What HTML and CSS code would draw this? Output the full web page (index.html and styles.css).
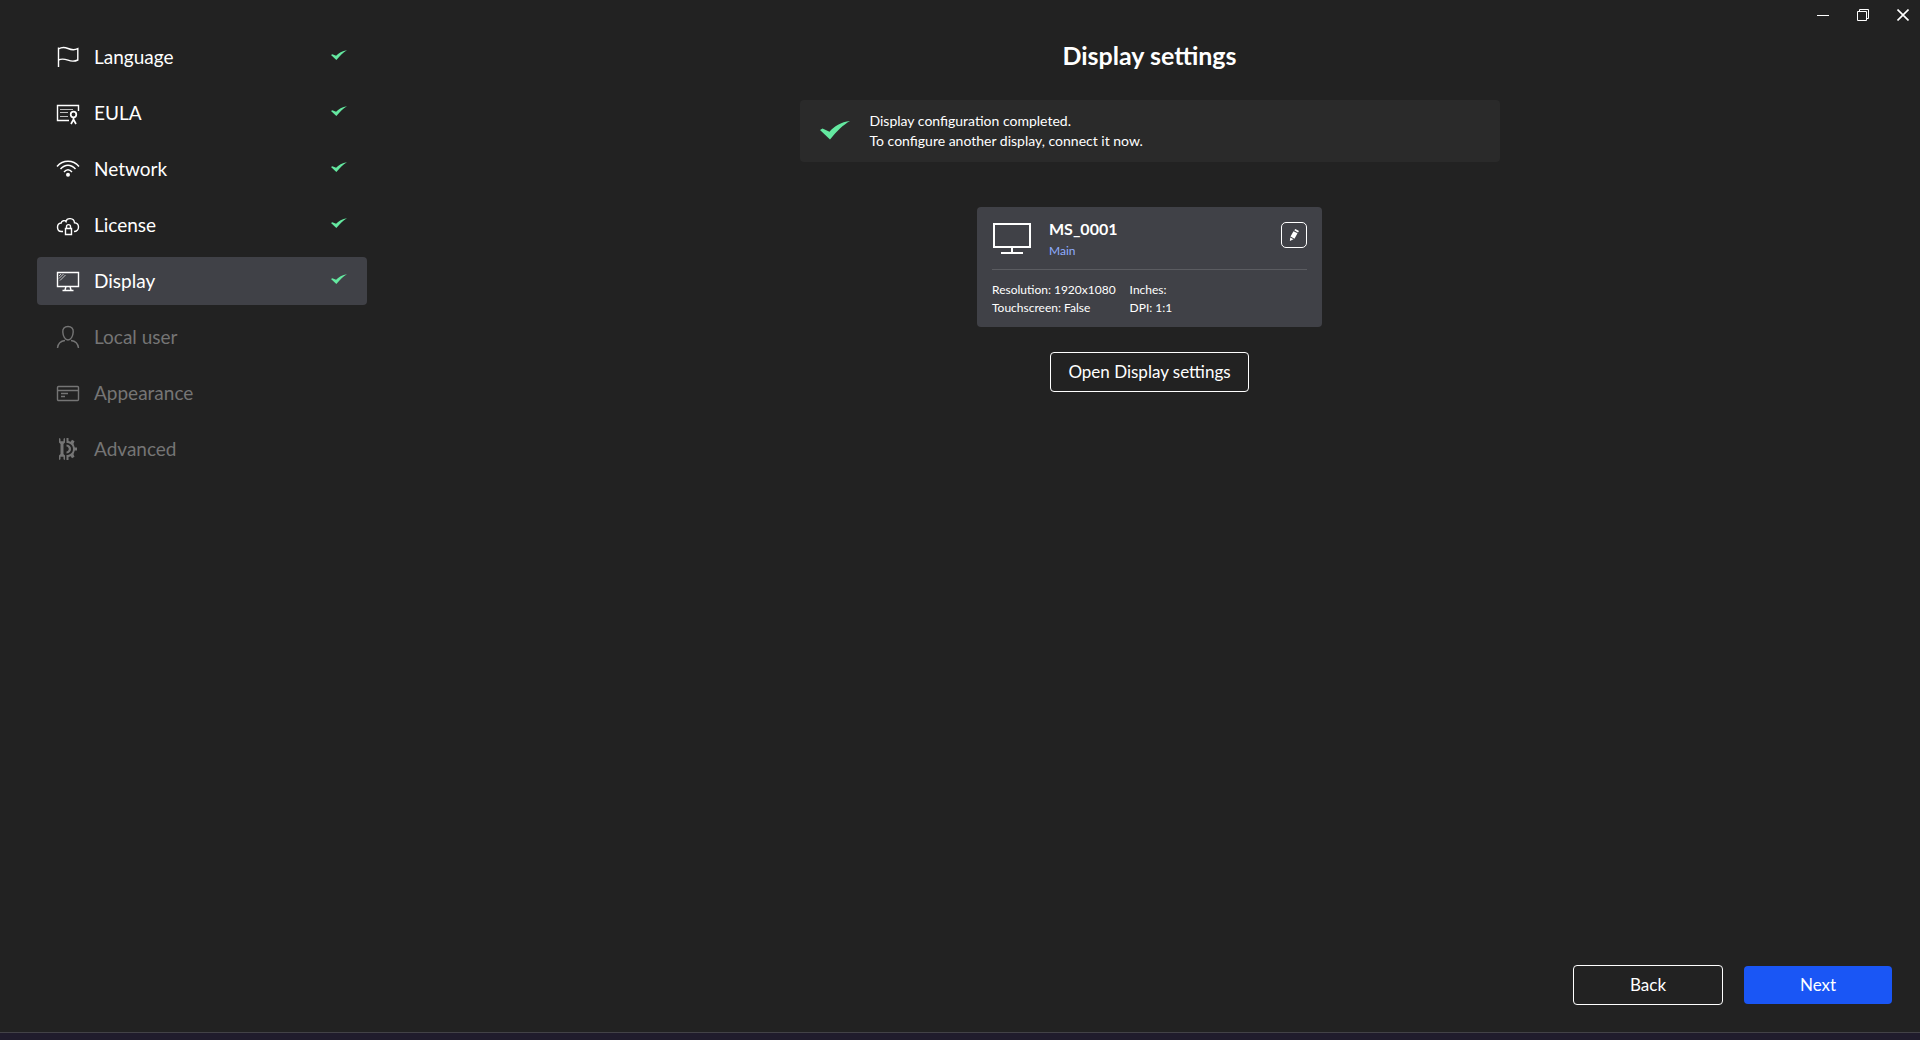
FILE: index.html
```html
<!DOCTYPE html>
<html lang="en">
<head>
<meta charset="utf-8">
<meta name="viewport" content="width=device-width, initial-scale=1">
<title>Display settings</title>
<link rel="stylesheet" href="styles.css">
</head>
<body>
<svg class="defs" aria-hidden="true">
  <symbol id="check" viewBox="0 0 30 20"><path d="M0 9 2.500 7.500l7 3.200C14 5.500 21 1 30 0c-7 4-13 10-20 18.500z" fill="currentColor"/></symbol>
</svg>
<div class="window">
  <aside class="sidebar">
    <nav class="steps" aria-label="Setup steps">
      <a class="step" href="#language">
        <svg class="step-icon" viewBox="0 0 24 24"><path d="M2.500 2.500V22M2.500 4c3-2 6-2 9.500-.5s7 1.500 9.800.2V15c-3 1.500-6.500 1.400-9.800.2S5.500 13.500 2.500 15"/></svg>
        <span class="step-name">Language</span>
        <svg class="step-check"><use href="#check"/></svg>
      </a>
      <a class="step" href="#eula">
        <svg class="step-icon" viewBox="0 0 24 24"><path d="M22.500 10V4.500h-21v15H13"/><path d="M4 8.500h13M4 11.500h8M4 15.500h8" class="thin"/><circle cx="17.500" cy="13.500" r="2.800" class="bold"/><path class="bold" d="M17.500 16v2.500L15 23M17.500 18.500 20 23"/></svg>
        <span class="step-name">EULA</span>
        <svg class="step-check"><use href="#check"/></svg>
      </a>
      <a class="step" href="#network">
        <svg class="step-icon" viewBox="0 0 24 24"><path d="M1 9.500c6-7 16-7 22 0M4.500 12c4.500-5 10.500-5 15 0M8 15c2.500-3 5.500-3 8 0"/><circle cx="12" cy="17.700" r="2" class="solid"/></svg>
        <span class="step-name">Network</span>
        <svg class="step-check"><use href="#check"/></svg>
      </a>
      <a class="step" href="#license">
        <svg class="step-icon" viewBox="0 0 24 24"><path d="M7 18.500H5.500C3 18.500 1.500 16.500 1.500 14.200c0-2.200 1.500-4 3.700-4.200C5.600 7.500 9 7 10 8.500 10.800 4.500 18 4.500 18.500 9.800c2.500 0 4 2 4 4.200 0 2.500-1.800 4.500-4.500 4.500"/><path d="M9.500 15.500h6v6h-6zM10.500 15.500v-2c0-2.500 4-2.500 4 0v2"/></svg>
        <span class="step-name">License</span>
        <svg class="step-check"><use href="#check"/></svg>
      </a>
      <a class="step active" href="#display" aria-current="step">
        <svg class="step-icon" viewBox="0 0 24 24"><path d="M1.500 3.500h21v14h-21zM10 17.500 9 21M14 17.500l1 3.500M6.500 21.500h11"/><path d="M3 9.500 7.500 5M4 11.500 9.500 6M3 7l2-2" class="thin"/></svg>
        <span class="step-name">Display</span>
        <svg class="step-check"><use href="#check"/></svg>
      </a>
      <a class="step disabled" href="#user" aria-disabled="true">
        <svg class="step-icon" viewBox="0 0 24 24"><path d="M12 1.500c3.500 0 5.500 2.200 5.200 5.500C17 11 15 15 12 15S7 11 6.800 7C6.500 3.700 8.500 1.500 12 1.500zM1.500 23c.5-4.500 3-7 7.500-7.500M22.500 23c-.5-4.500-3-7-7.500-7.500"/></svg>
        <span class="step-name">Local user</span>
      </a>
      <a class="step disabled" href="#appearance" aria-disabled="true">
        <svg class="step-icon" viewBox="0 0 24 24"><rect x="1.500" y="5.500" width="21" height="14" rx="1"/><path d="M2 9.500h20M5 12.500h7M5 15.500h4"/></svg>
        <span class="step-name">Appearance</span>
      </a>
      <a class="step disabled" href="#advanced" aria-disabled="true">
        <svg class="step-icon" viewBox="0 0 24 24"><path class="solid" d="M3 1l1.500.7v2.500h3V1.700L9 1v4.500L7.500 7v10L9 18.500V23l-1.500-.7v-2.500h-3v2.500L3 23v-4.500L4.500 17V7L3 5.500zM10.500 1h2v3l2.200.8L16 2.700l2.500 1.600-1 2.400 1.300 3.800H21v3h-2.200l-1.300 3.800 1 2.400-2.500 1.600-1.300-2.100-2.200.8v3h-2v-5c4 0 6.500-2.500 6.500-6s-2.500-6-6.500-6zM10.500 7.500c6 0 6 9 0 9v-2c3-.5 3-4.500 0-5z"/></svg>
        <span class="step-name">Advanced</span>
      </a>
    </nav>
  </aside>
  <div class="content">
    <div class="window-controls">
      <button type="button" aria-label="Minimize"><svg viewBox="0 0 12 12"><path d="M0 6.500h12"/></svg></button>
      <button type="button" aria-label="Restore"><svg viewBox="0 0 12 12"><path d="M.5 2.500h9v9h-9zM2.500 2.500v-2h9v9h-2"/></svg></button>
      <button type="button" aria-label="Close"><svg viewBox="0 0 12 12"><path class="heavy" d="M.5.5l11 11M11.500.5l-11 11"/></svg></button>
    </div>
    <main class="main">
      <h1>Display settings</h1>
      <div class="notice" role="status">
        <svg class="notice-check"><use href="#check"/></svg>
        <p>Display configuration completed.<br>To configure another display, connect it now.</p>
      </div>
      <section class="card">
        <header class="card-head">
          <svg class="monitor" viewBox="0 0 38 32"><path d="M1 1h36v23H1zM19 24v6M8 30h22"/></svg>
          <div class="card-title"><h2>MS_0001</h2><span>Main</span></div>
          <button class="edit" type="button" aria-label="Edit display"><svg viewBox="0 0 10 12"><path d="M4.500 2.300 8.500 4.300 5.500 9.700 1.500 7.600zM1.200 8.400l3.300 1.900L.9 12zM5.300 1.300 6.300 0l3.700 2-1 1.400z"/></svg></button>
        </header>
        <div class="facts">
          <div><p>Resolution: 1920x1080</p><p>Touchscreen: False</p></div>
          <div><p>Inches:</p><p>DPI: 1:1</p></div>
        </div>
      </section>
      <button class="button open" type="button">Open Display settings</button>
    </main>
    <footer class="actions">
      <button class="button back" type="button">Back</button>
      <button class="button next" type="button">Next</button>
    </footer>
  </div>
</div>
<div class="taskbar"></div>
</body>
</html>
```
FILE: styles.css
```css
* { box-sizing: border-box; }
body {
  margin: 0;
  min-height: 100vh;
  display: flex;
  flex-direction: column;
  background: #222222;
  color: #ffffff;
  font-family: Lato, "Open Sans", sans-serif;
}
h1, h2, p { margin: 0; }
button { font: inherit; color: inherit; cursor: pointer; }
.defs { display: none; }
.window { flex: 1; display: flex; }
.sidebar { flex: none; width: 379px; padding: 33px 12px 33px 37px; }
.steps { display: flex; flex-direction: column; gap: 8px; }
.step {
  display: flex;
  align-items: center;
  height: 48px;
  padding: 0 20px 0 19px;
  border-radius: 4px;
  color: #ffffff;
  font-size: 19px;
  line-height: 24px;
  text-decoration: none;
}
.step.active { background: #404147; }
.step.disabled { color: #757575; }
.step-icon {
  width: 24px;
  height: 24px;
  margin-right: 14px;
  fill: none;
  stroke: currentColor;
  stroke-width: 1.400;
}
.step-icon .thin { stroke-width: 1; opacity: .7; }
.step-icon .bold { stroke-width: 1.700; }
.step-icon .solid { fill: currentColor; stroke: none; }
.step-name { flex: 1; }
.step-check { width: 16px; height: 11px; margin-bottom: 3px; color: #64e8a0; }
.content { flex: 1; display: flex; flex-direction: column; }
.window-controls { display: flex; justify-content: flex-end; gap: 6px; height: 30px; }
.window-controls button {
  width: 34px;
  padding: 0;
  border: 0;
  background: none;
  display: grid;
  place-items: center;
}
.window-controls svg { width: 12px; height: 12px; fill: none; stroke: #ffffff; }
.window-controls .heavy { stroke-width: 1.600; }
.main { flex: 1; display: flex; flex-direction: column; align-items: center; }
h1 { margin: 9px 0 29px; font-size: 25px; line-height: 32px; font-weight: 700; }
.notice {
  width: 100%;
  max-width: 700px;
  display: flex;
  align-items: center;
  gap: 20px;
  padding: 11px 20px;
  border-radius: 4px;
  background: #2a2a2a;
  font-size: 14px;
  line-height: 20px;
}
.notice-check { width: 30px; height: 20px; color: #64e8a0; }
.card {
  width: 345px;
  margin: 45px 0 25px;
  padding: 15px 15px 10px;
  border-radius: 4px;
  background: #404147;
}
.card-head { display: flex; height: 48px; border-bottom: 1px solid #5b5c61; }
.monitor { width: 38px; height: 32px; margin: 1px 18px 0 1px; fill: none; stroke: #ffffff; stroke-width: 2; }
.card-title { flex: 1; }
h2 { font-size: 16px; line-height: 14px; font-weight: 700; }
.card-title span { display: block; margin-top: 6px; font-size: 12px; line-height: 18px; color: #8fadff; }
.edit {
  width: 26px;
  height: 26px;
  padding: 0;
  border: 1px solid #ffffff;
  border-radius: 5px;
  background: none;
  display: grid;
  place-items: center;
}
.edit svg { width: 10px; height: 12px; fill: #ffffff; }
.facts { display: flex; gap: 14px; padding-top: 11px; font-size: 12px; line-height: 18px; }
.button {
  height: 40px;
  padding: 0 17px;
  border: 1px solid #ffffff;
  border-radius: 4px;
  background: none;
  font-size: 17px;
  line-height: 20px;
}
.actions { display: flex; justify-content: flex-end; align-items: center; gap: 21px; padding: 0 28px 27px; }
.back { width: 150px; }
.next { width: 148px; height: 38px; border: 0; background: #1a56f5; }
.taskbar { height: 8px; border-top: 1px solid #434247; background: #201c2c; }
```
